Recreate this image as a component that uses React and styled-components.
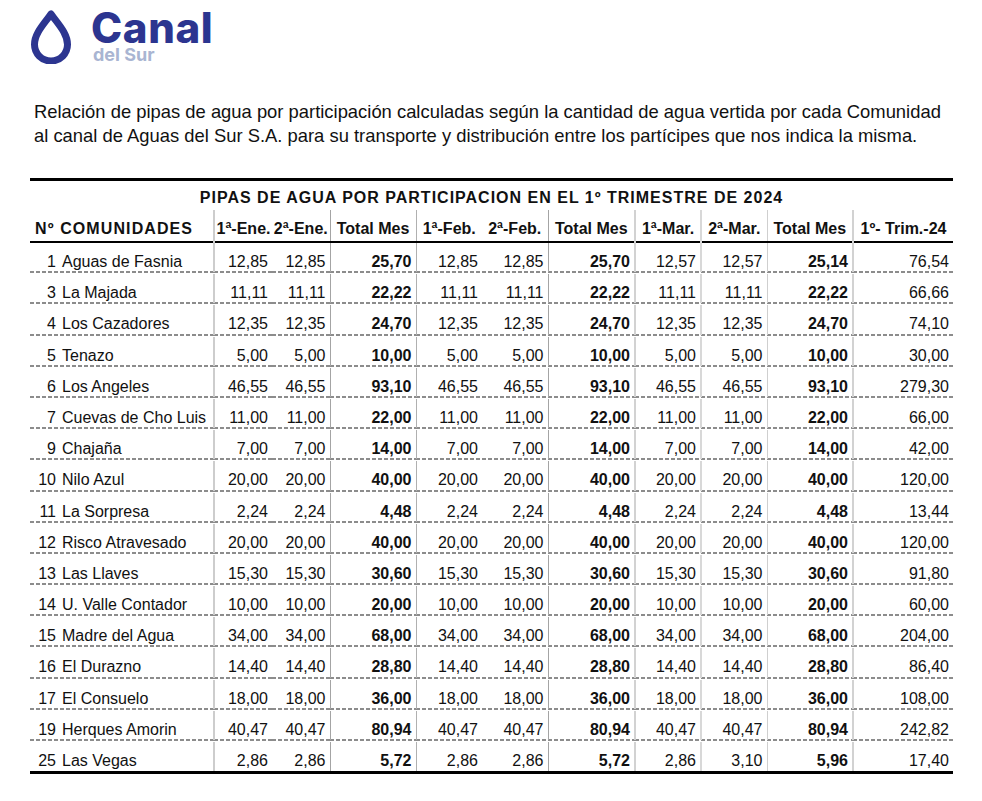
import React from "react";
import styled, { createGlobalStyle } from "styled-components";

const GlobalStyle = createGlobalStyle`
  body {
    margin: 0;
    background: #ffffff;
    font-family: "Liberation Sans", Arial, sans-serif;
    color: #111111;
  }
`;

const Page = styled.div`
  width: 982px;
  padding: 10px 0 20px 30px;
  box-sizing: border-box;
`;

const Logo = styled.div`
  display: flex;
  align-items: flex-start;
  gap: 19px;
  height: 53px;
`;

const Brand = styled.div`
  display: flex;
  flex-direction: column;
  padding-top: 1px;
`;

const BrandName = styled.div`
  font-family: Inter, "Open Sans", sans-serif;
  font-weight: 800;
  font-size: 42px;
  line-height: 34px;
  letter-spacing: 0.6px;
  color: #2c3590;
`;

const BrandSub = styled.div`
  font-family: Inter, "Open Sans", sans-serif;
  font-weight: 700;
  font-size: 18px;
  line-height: 16px;
  margin-top: 2px;
  margin-left: 2px;
  color: #a9b5d2;
`;

const Intro = styled.p`
  margin: 37px 0 0 4px;
  font-size: 18.4px;
  line-height: 24px;
  color: #111111;
`;

const Table = styled.table`
  margin-top: 30px;
  width: 923px;
  table-layout: fixed;
  border-collapse: collapse;
  border-top: 3px solid #000;
  border-bottom: 3px solid #000;
`;

const TitleCell = styled.th`
  padding: 8px 0 3px;
  font-size: 16px;
  line-height: 18px;
  letter-spacing: 1px;
  font-weight: 700;
  text-align: center;
`;

const HeadRow = styled.tr`
  border-bottom: 2px solid #000;
`;

const HeadCell = styled.th`
  padding: 10px 0 3px;
  font-size: 16px;
  line-height: 18px;
  font-weight: 700;
  white-space: nowrap;
  text-align: ${(p) => (p.$left ? "left" : "center")};
  padding-left: ${(p) => (p.$left ? "5px" : "0")};
  letter-spacing: ${(p) => (p.$left ? "1.1px" : "0")};
  border-left: ${(p) => p.$line || "none"};
`;

const Row = styled.tr``;

const Cell = styled.td`
  padding: 10px 4px 1.2px 0;
  font-size: 16px;
  line-height: 18px;
  white-space: nowrap;
  text-align: right;
  font-weight: ${(p) => (p.$bold ? 700 : 400)};
  border-left: ${(p) => p.$line || "none"};
  border-bottom: ${(p) => (p.$last ? "none" : "2px solid transparent")};
  background-image: ${(p) =>
    p.$last ? "none" : "linear-gradient(to right, #8c8c8c 4px, transparent 4px)"};
  background-size: 6px 2px;
  background-repeat: repeat-x;
  background-position: left bottom;
  background-origin: border-box;
  background-clip: border-box;
`;

const NameCell = styled(Cell)`
  text-align: left;
  padding-right: 0;
`;

const Num = styled.span`
  display: inline-block;
  width: 26px;
  margin-right: 6px;
  text-align: right;
`;

const widths = [184, 58, 58, 86, 66, 66, 87, 66, 66, 86, 100];

const lines = [
  null,
  "2px solid #cdcdcd",
  null,
  "1px solid #a4a4a4",
  "1px solid #b0b0b0",
  null,
  "1px solid #a4a4a4",
  "2px solid #d2d2d2",
  "2px solid #d8d8d8",
  "1px solid #cfcfcf",
  "2px solid #d2d2d2",
];

const heads = [
  "1ª-Ene.",
  "2ª-Ene.",
  "Total Mes",
  "1ª-Feb.",
  "2ª-Feb.",
  "Total Mes",
  "1ª-Mar.",
  "2ª-Mar.",
  "Total Mes",
  "1º- Trim.-24",
];

const bold = [false, false, true, false, false, true, false, false, true, false];

// same amount every fortnight of the quarter
const even = (v, t, q) => [v, v, t, v, v, t, v, v, t, q];

const rows = [
  [1, "Aguas de Fasnia", ["12,85", "12,85", "25,70", "12,85", "12,85", "25,70", "12,57", "12,57", "25,14", "76,54"]],
  [3, "La Majada", even("11,11", "22,22", "66,66")],
  [4, "Los Cazadores", even("12,35", "24,70", "74,10")],
  [5, "Tenazo", even("5,00", "10,00", "30,00")],
  [6, "Los Angeles", even("46,55", "93,10", "279,30")],
  [7, "Cuevas de Cho Luis", even("11,00", "22,00", "66,00")],
  [9, "Chajaña", even("7,00", "14,00", "42,00")],
  [10, "Nilo Azul", even("20,00", "40,00", "120,00")],
  [11, "La Sorpresa", even("2,24", "4,48", "13,44")],
  [12, "Risco Atravesado", even("20,00", "40,00", "120,00")],
  [13, "Las Llaves", even("15,30", "30,60", "91,80")],
  [14, "U. Valle Contador", even("10,00", "20,00", "60,00")],
  [15, "Madre del Agua", even("34,00", "68,00", "204,00")],
  [16, "El Durazno", even("14,40", "28,80", "86,40")],
  [17, "El Consuelo", even("18,00", "36,00", "108,00")],
  [19, "Herques Amorin", even("40,47", "80,94", "242,82")],
  [25, "Las Vegas", ["2,86", "2,86", "5,72", "2,86", "2,86", "5,72", "2,86", "3,10", "5,96", "17,40"]],
];

const Drop = () => (
  <svg width="42" height="54" viewBox="0 0 42 54">
    <path
      d="M21 4 C 15 13, 4.5 23, 4.5 34.5 A 16.5 16.5 0 0 0 37.5 34.5 C 37.5 23, 27 13, 21 4 Z"
      fill="none"
      stroke="#2c3590"
      strokeWidth="7"
      strokeLinejoin="round"
    />
  </svg>
);

export default function App() {
  return (
    <Page>
      <GlobalStyle />
      <Logo>
        <Drop />
        <Brand>
          <BrandName>Canal</BrandName>
          <BrandSub>del Sur</BrandSub>
        </Brand>
      </Logo>
      <Intro>
        Relación de pipas de agua por participación calculadas según la cantidad de agua vertida por cada Comunidad
        <br />
        al canal de Aguas del Sur S.A. para su transporte y distribución entre los partícipes que nos indica la misma.
      </Intro>
      <Table>
        <colgroup>
          {widths.map((w, i) => (
            <col key={i} style={{ width: w }} />
          ))}
        </colgroup>
        <thead>
          <tr>
            <TitleCell colSpan={11}>PIPAS DE AGUA POR PARTICIPACION EN EL 1º TRIMESTRE DE 2024</TitleCell>
          </tr>
          <HeadRow>
            <HeadCell $left>Nº COMUNIDADES</HeadCell>
            {heads.map((h, i) => (
              <HeadCell key={i} $line={lines[i + 1]}>
                {h}
              </HeadCell>
            ))}
          </HeadRow>
        </thead>
        <tbody>
          {rows.map(([n, name, vals], r) => {
            const last = r === rows.length - 1;
            return (
              <Row key={n}>
                <NameCell $last={last}>
                  <Num>{n}</Num>
                  {name}
                </NameCell>
                {vals.map((v, i) => (
                  <Cell key={i} $bold={bold[i]} $line={lines[i + 1]} $last={last}>
                    {v}
                  </Cell>
                ))}
              </Row>
            );
          })}
        </tbody>
      </Table>
    </Page>
  );
}
